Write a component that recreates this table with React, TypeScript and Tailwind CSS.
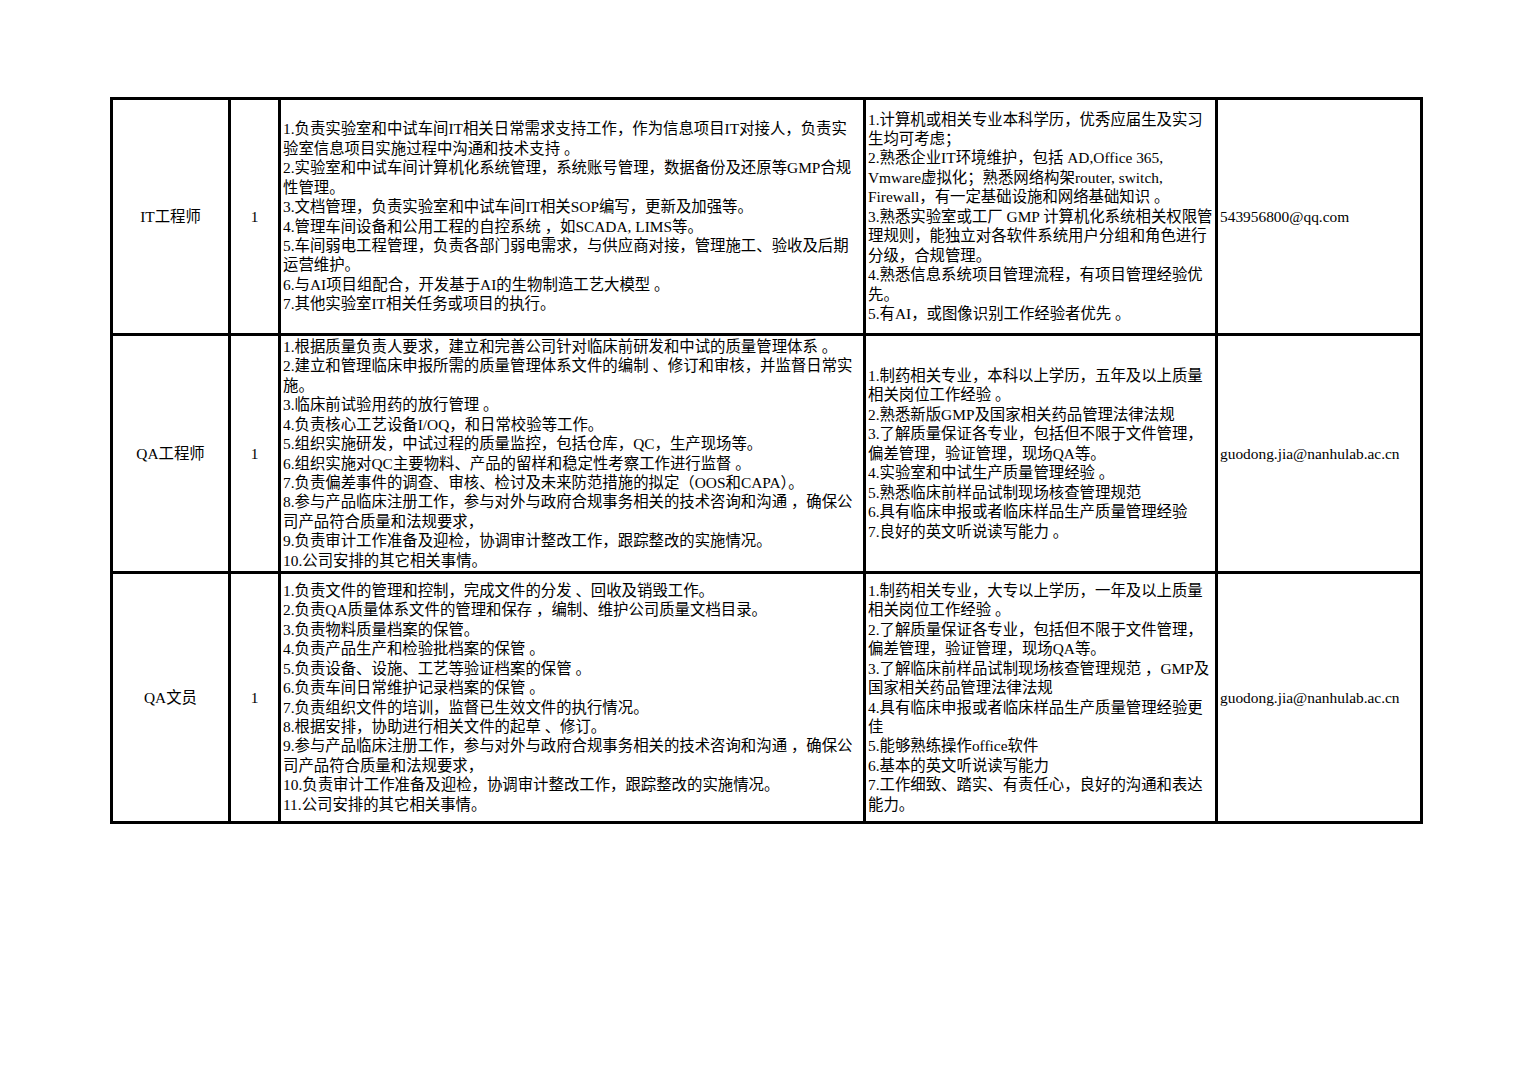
import React from 'react';

type Row = {
  title: string;
  count: string;
  duties: string[][];
  reqs: string[][];
  email: string;
};

// each item is split into the lines the printed sheet shows
const rows: Row[] = [
  {
    title: 'IT工程师',
    count: '1',
    duties: [
      ['1.负责实验室和中试车间IT相关日常需求支持工作，作为信息项目IT对接人，负责实', '验室信息项目实施过程中沟通和技术支持 。'],
      ['2.实验室和中试车间计算机化系统管理，系统账号管理，数据备份及还原等GMP合规', '性管理。'],
      ['3.文档管理，负责实验室和中试车间IT相关SOP编写，更新及加强等。'],
      ['4.管理车间设备和公用工程的自控系统 ，如SCADA, LIMS等。'],
      ['5.车间弱电工程管理，负责各部门弱电需求，与供应商对接，管理施工、验收及后期', '运营维护。'],
      ['6.与AI项目组配合，开发基于AI的生物制造工艺大模型 。'],
      ['7.其他实验室IT相关任务或项目的执行。'],
    ],
    reqs: [
      ['1.计算机或相关专业本科学历，优秀应届生及实习', '生均可考虑；'],
      ['2.熟悉企业IT环境维护，包括 AD,Office 365,', 'Vmware虚拟化；熟悉网络构架router, switch,', 'Firewall，有一定基础设施和网络基础知识 。'],
      ['3.熟悉实验室或工厂 GMP 计算机化系统相关权限管', '理规则，能独立对各软件系统用户分组和角色进行', '分级，合规管理。'],
      ['4.熟悉信息系统项目管理流程，有项目管理经验优', '先。'],
      ['5.有AI，或图像识别工作经验者优先 。'],
    ],
    email: '543956800@qq.com',
  },
  {
    title: 'QA工程师',
    count: '1',
    duties: [
      ['1.根据质量负责人要求，建立和完善公司针对临床前研发和中试的质量管理体系 。'],
      ['2.建立和管理临床申报所需的质量管理体系文件的编制 、修订和审核，并监督日常实', '施。'],
      ['3.临床前试验用药的放行管理 。'],
      ['4.负责核心工艺设备I/OQ，和日常校验等工作。'],
      ['5.组织实施研发，中试过程的质量监控，包括仓库，QC，生产现场等。'],
      ['6.组织实施对QC主要物料、产品的留样和稳定性考察工作进行监督 。'],
      ['7.负责偏差事件的调查、审核、检讨及未来防范措施的拟定（OOS和CAPA）。'],
      ['8.参与产品临床注册工作，参与对外与政府合规事务相关的技术咨询和沟通 ，确保公', '司产品符合质量和法规要求，'],
      ['9.负责审计工作准备及迎检，协调审计整改工作，跟踪整改的实施情况。'],
      ['10.公司安排的其它相关事情。'],
    ],
    reqs: [
      ['1.制药相关专业，本科以上学历，五年及以上质量', '相关岗位工作经验 。'],
      ['2.熟悉新版GMP及国家相关药品管理法律法规'],
      ['3.了解质量保证各专业，包括但不限于文件管理，', '偏差管理，验证管理，现场QA等。'],
      ['4.实验室和中试生产质量管理经验 。'],
      ['5.熟悉临床前样品试制现场核查管理规范'],
      ['6.具有临床申报或者临床样品生产质量管理经验'],
      ['7.良好的英文听说读写能力 。'],
    ],
    email: 'guodong.jia@nanhulab.ac.cn',
  },
  {
    title: 'QA文员',
    count: '1',
    duties: [
      ['1.负责文件的管理和控制，完成文件的分发 、回收及销毁工作。'],
      ['2.负责QA质量体系文件的管理和保存 ，编制、维护公司质量文档目录。'],
      ['3.负责物料质量档案的保管。'],
      ['4.负责产品生产和检验批档案的保管 。'],
      ['5.负责设备、设施、工艺等验证档案的保管 。'],
      ['6.负责车间日常维护记录档案的保管 。'],
      ['7.负责组织文件的培训，监督已生效文件的执行情况。'],
      ['8.根据安排，协助进行相关文件的起草 、修订。'],
      ['9.参与产品临床注册工作，参与对外与政府合规事务相关的技术咨询和沟通 ，确保公', '司产品符合质量和法规要求，'],
      ['10.负责审计工作准备及迎检，协调审计整改工作，跟踪整改的实施情况。'],
      ['11.公司安排的其它相关事情。'],
    ],
    reqs: [
      ['1.制药相关专业，大专以上学历，一年及以上质量', '相关岗位工作经验 。'],
      ['2.了解质量保证各专业，包括但不限于文件管理，', '偏差管理，验证管理，现场QA等。'],
      ['3.了解临床前样品试制现场核查管理规范 ，GMP及', '国家相关药品管理法律法规'],
      ['4.具有临床申报或者临床样品生产质量管理经验更', '佳'],
      ['5.能够熟练操作office软件'],
      ['6.基本的英文听说读写能力'],
      ['7.工作细致、踏实、有责任心，良好的沟通和表达', '能力。'],
    ],
    email: 'guodong.jia@nanhulab.ac.cn',
  },
];

const ItemList: React.FC<{ items: string[][] }> = ({ items }) => (
  <div className="flex flex-col">
    {items.map((lines, i) => (
      <p key={i} className="whitespace-pre">
        {lines.map((line, j) => (
          <React.Fragment key={j}>
            {j > 0 && <br />}
            {line}
          </React.Fragment>
        ))}
      </p>
    ))}
  </div>
);

export default function App() {
  return (
    <div className="min-h-screen bg-white pt-[97px] pl-[110px] text-black font-['Liberation_Serif','Noto_Sans_CJK_SC',serif] text-[15.4px] leading-[19.45px]">
      <div className="grid w-fit grid-cols-[115px_47px_582px_349px_202px] grid-rows-[233px_235px_247px] gap-[3px] bg-black p-[3px]">
        {rows.map((row) => (
          <React.Fragment key={row.title}>
            <div className="flex items-center justify-center bg-white">{row.title}</div>
            <div className="flex items-center justify-center bg-white">{row.count}</div>
            <div className="flex items-center bg-white pl-[2px]">
              <ItemList items={row.duties} />
            </div>
            <div className="flex items-center bg-white pl-[2px]">
              <ItemList items={row.reqs} />
            </div>
            <div className="flex items-center bg-white pl-[2px]">{row.email}</div>
          </React.Fragment>
        ))}
      </div>
    </div>
  );
}
